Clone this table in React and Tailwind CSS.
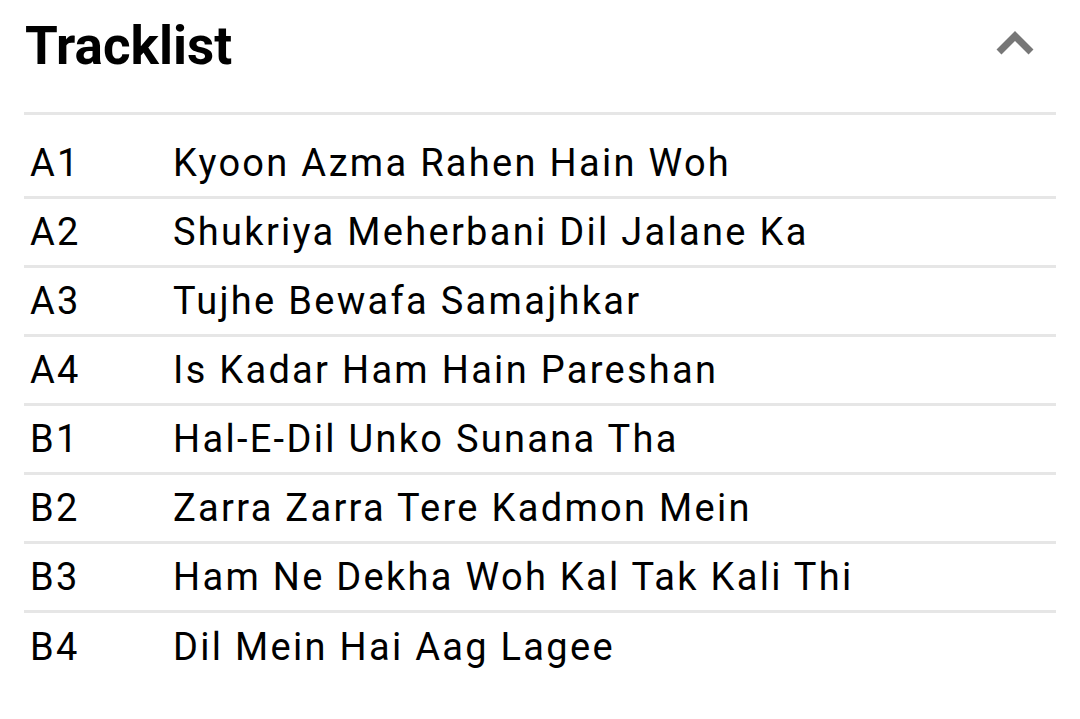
import React from 'react';

const tracks = [
  { pos: 'A1', title: 'Kyoon Azma Rahen Hain Woh' },
  { pos: 'A2', title: 'Shukriya Meherbani Dil Jalane Ka' },
  { pos: 'A3', title: 'Tujhe Bewafa Samajhkar' },
  { pos: 'A4', title: 'Is Kadar Ham Hain Pareshan' },
  { pos: 'B1', title: 'Hal-E-Dil Unko Sunana Tha' },
  { pos: 'B2', title: 'Zarra Zarra Tere Kadmon Mein' },
  { pos: 'B3', title: 'Ham Ne Dekha Woh Kal Tak Kali Thi' },
  { pos: 'B4', title: 'Dil Mein Hai Aag Lagee' },
];

const App = () => {
  return (
    <div className="w-[1080px] h-[719px] bg-white px-[24px] text-black" style={{ fontFamily: 'Roboto, sans-serif' }}>
      {/* Header */}
      <div className="flex h-[115px] items-start justify-between border-b-[3px] border-[#e6e6e6]">
        <h2 className="ml-[1px] mt-[14px] text-[53px] font-bold leading-[64px]">Tracklist</h2>
        <button className="mr-[21px] mt-[29px] text-[#777]" title="Collapse">
          <svg width="40" height="28" viewBox="0 0 40 28" fill="none">
            <polyline points="4,23 20,7 36,23" stroke="currentColor" strokeWidth="7" strokeLinecap="butt" strokeLinejoin="miter" />
          </svg>
        </button>
      </div>

      {/* Track rows */}
      <div className="pt-[15px]">
        {tracks.map((t, i) => (
          <div
            key={t.pos}
            className={`flex h-[69px] items-center text-[38px] tracking-[2.3px] ${i < tracks.length - 1 ? 'border-b-[3px] border-[#e6e6e6]' : ''}`}
          >
            <span className="w-[149px] pl-[6px]">{t.pos}</span>
            <span>{t.title}</span>
          </div>
        ))}
      </div>
    </div>
  );
};

export default App;
